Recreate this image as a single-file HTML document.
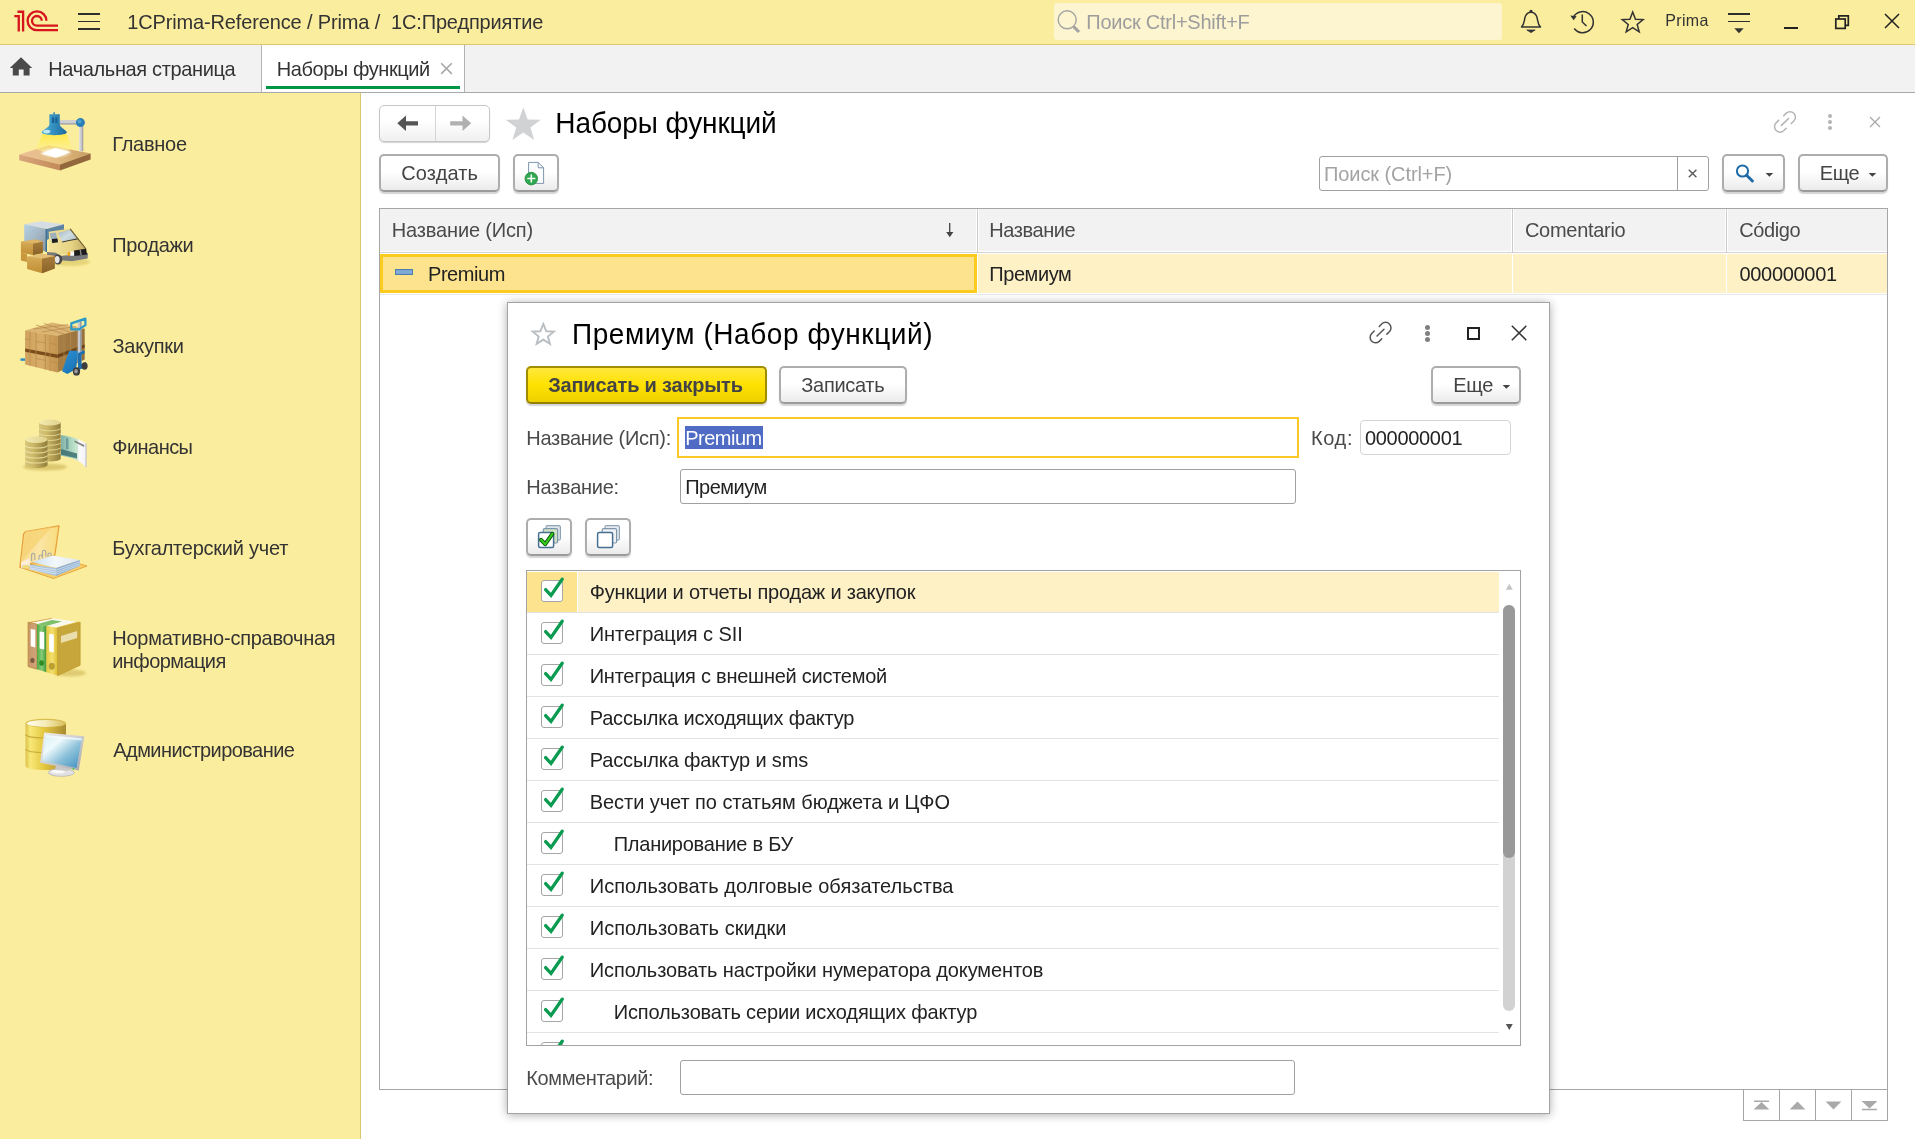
<!DOCTYPE html>
<html lang="ru"><head><meta charset="utf-8"><title>Наборы функций</title><style>
*{box-sizing:border-box;margin:0;padding:0}
html,body{width:1917px;height:1139px;overflow:hidden;background:#fff}
body{font-family:"Liberation Sans",sans-serif;position:relative}
div,span.t,svg{position:absolute}
.t{white-space:pre;transform:scaleY(1.055)}
.btn{border:2px solid #adadad;border-bottom-color:#9b9b9b;border-radius:5px;background:linear-gradient(#fff 0%,#fff 48%,#ebebeb 100%);box-shadow:0 2px 1px rgba(0,0,0,.17)}
.ybtn{border:2px solid #a18d02;border-bottom-color:#938000;border-radius:5px;background:linear-gradient(#ffe83c 0%,#ffe100 50%,#ecd100 100%);box-shadow:0 2px 1px rgba(0,0,40,.17)}
.inp{border:1px solid #a0a0a0;border-radius:3px;background:#fff}
</style></head><body>
<div style="left:0px;top:0px;width:1915px;height:44px;background:#fbed9e"></div>
<div style="left:0px;top:44px;width:1915px;height:1px;background:#d9c86e"></div>
<svg style="left:0;top:0" width="70" height="44" viewBox="0 0 70 44" fill="none" stroke="#d7141d" stroke-width="2.3">
<path d="M46.4,20.8 A9.4,9.4 0 1 0 37,30.2 H58"/><path d="M41.7,20.8 A4.85,4.85 0 1 0 36.85,25.7 H58"/>
<path d="M14.3,16.2 H18.75 V31.5"/><path d="M17.5,11.75 H23.1 V31.5"/></svg>
<div style="left:78.4px;top:13.25px;width:21.2px;height:1.5px;background:#2e2e2e"></div>
<div style="left:78.4px;top:20.75px;width:21.2px;height:1.5px;background:#2e2e2e"></div>
<div style="left:78.4px;top:28.25px;width:21.2px;height:1.5px;background:#2e2e2e"></div>
<span class="t" style="left:127.25px;top:11px;font-size:20px;line-height:22px;color:#333;font-weight:400;letter-spacing:-0.143px;transform-origin:0 18px;">1CPrima-Reference / Prima /  1С:Предприятие</span>
<div style="left:1054px;top:3px;width:448px;height:37px;background:#fdf5d0;border-radius:3px"></div>
<svg style="left:1054px;top:3px" width="34" height="37" viewBox="1054 3 34 37" fill="none" stroke="#a3a3a3"><circle cx="1067.2" cy="19.8" r="9" stroke-width="1.4"/><path d="M1073.6,26.6 L1079,32" stroke-width="3"/></svg>
<span class="t" style="left:1086.25px;top:11px;font-size:20px;line-height:22px;color:#9d9d9d;font-weight:400;letter-spacing:-0.244px;transform-origin:0 18px;">Поиск Ctrl+Shift+F</span>
<svg style="left:1516px;top:6px" width="30" height="30" viewBox="1516 6 30 30" fill="none" stroke="#333" stroke-width="1.5">
<path d="M1521.5,27 C1525,23.5 1524,19 1525.5,16 C1527,13 1529,12.2 1531,12.2 C1533,12.2 1535,13 1536.5,16 C1538,19 1537,23.5 1540.5,27 Z" stroke-linejoin="round"/>
<circle cx="1531" cy="11.3" r="0.9" fill="#333"/><path d="M1526.8,30 H1535.2 L1531,32.6 Z" fill="#333" stroke-width="0.8"/></svg>
<svg style="left:1566px;top:6px" width="32" height="32" viewBox="1566 6 32 32" fill="none" stroke="#333" stroke-width="1.5">
<path d="M1573.2,17.5 A10.6,10.6 0 1 1 1574.2,28.5"/><path d="M1582.3,14.5 V22 L1586.5,26"/><path d="M1570.3,15.5 L1573.6,20.3 L1576.6,16.2 Z" fill="#333" stroke="none"/></svg>
<svg style="left:1618px;top:6px" width="30" height="30" viewBox="1618 6 30 30" fill="none" stroke="#333" stroke-width="1.5" stroke-linejoin="miter">
<path d="M1632.70,11.97 L1635.49,19.22 L1643.12,19.60 L1637.16,24.43 L1639.21,31.87 L1632.70,27.59 L1626.19,31.87 L1628.24,24.43 L1622.28,19.60 L1629.91,19.22 Z"/></svg>
<span class="t" style="left:1665.27px;top:12px;font-size:16px;line-height:17px;color:#333;font-weight:400;letter-spacing:0.341px;transform-origin:0 14px;">Prima</span>
<div style="left:1728.3px;top:13.25px;width:21.4px;height:1.5px;background:#2e2e2e"></div>
<div style="left:1728.3px;top:20.75px;width:21.4px;height:1.5px;background:#2e2e2e"></div>
<svg style="left:1734px;top:28px" width="10" height="6" viewBox="0 0 10 6"><path d="M0.3,0.3 H9.7 L5,5.2 Z" fill="#333"/></svg>
<div style="left:1784px;top:27px;width:14px;height:2px;background:#222"></div>
<svg style="left:1833px;top:13px" width="18" height="18" viewBox="1833 13 18 18" fill="none" stroke="#222" stroke-width="1.7">
<rect x="1835.8" y="19" width="9.4" height="9.4"/><path d="M1838.8,19 V15.9 H1848.3 V25.4 H1845.2"/></svg>
<svg style="left:1883px;top:12px" width="18" height="18" viewBox="1883 12 18 18" fill="none" stroke="#222" stroke-width="1.5"><path d="M1885,14 L1899,28 M1899,14 L1885,28"/></svg>
<div style="left:0px;top:45px;width:1915px;height:47px;background:#f2f2f2"></div>
<div style="left:0px;top:92px;width:1915px;height:1px;background:#a9a9a9"></div>
<svg style="left:9px;top:56px" width="24" height="21" viewBox="9 56 24 21"><path d="M21,57.3 L32.2,68 H29.6 V75.6 H23.6 V69.6 H18.8 V75.6 H12.8 V68 H9.8 Z" fill="#4a4a4a"/></svg>
<span class="t" style="left:48.25px;top:57.5px;font-size:20px;line-height:22px;color:#333;font-weight:400;letter-spacing:-0.354px;transform-origin:0 18px;">Начальная страница</span>
<div style="left:261px;top:45px;width:204px;height:47px;background:#fff;border-left:1px solid #b3b3b3;border-right:1px solid #b3b3b3"></div>
<div style="left:266px;top:86px;width:194px;height:3px;background:#009646"></div>
<span class="t" style="left:276.75px;top:57.5px;font-size:20px;line-height:22px;color:#333;font-weight:400;letter-spacing:-0.430px;transform-origin:0 18px;">Наборы функций</span>
<svg style="left:438px;top:60px" width="17" height="17" viewBox="438 60 17 17" fill="none" stroke="#a8a8a8" stroke-width="1.6"><path d="M441.2,63.3 L451.8,73.9 M451.8,63.3 L441.2,73.9"/></svg>
<div style="left:0px;top:93px;width:360px;height:1046px;background:#fbed9e"></div>
<div style="left:360px;top:93px;width:1px;height:1046px;background:#d9c86e"></div>
<span class="t" style="left:112.25px;top:132.5px;font-size:20px;line-height:22px;color:#333;font-weight:400;letter-spacing:-0.277px;transform-origin:0 18px;">Главное</span>
<span class="t" style="left:112.25px;top:233.5px;font-size:20px;line-height:22px;color:#333;font-weight:400;letter-spacing:-0.335px;transform-origin:0 18px;">Продажи</span>
<span class="t" style="left:112.4px;top:334.5px;font-size:20px;line-height:22px;color:#333;font-weight:400;letter-spacing:-0.231px;transform-origin:0 18px;">Закупки</span>
<span class="t" style="left:112.31px;top:435.5px;font-size:20px;line-height:22px;color:#333;font-weight:400;letter-spacing:-0.547px;transform-origin:0 18px;">Финансы</span>
<span class="t" style="left:112.25px;top:536.5px;font-size:20px;line-height:22px;color:#333;font-weight:400;letter-spacing:-0.244px;transform-origin:0 18px;">Бухгалтерский учет</span>
<span class="t" style="left:112.25px;top:626.5px;font-size:20px;line-height:22px;color:#333;font-weight:400;letter-spacing:-0.252px;transform-origin:0 18px;">Нормативно-справочная</span>
<span class="t" style="left:112.26px;top:649.5px;font-size:20px;line-height:22px;color:#333;font-weight:400;letter-spacing:-0.578px;transform-origin:0 18px;">информация</span>
<span class="t" style="left:113.29px;top:738.5px;font-size:20px;line-height:22px;color:#333;font-weight:400;letter-spacing:-0.570px;transform-origin:0 18px;">Администрирование</span>
<svg style="left:0;top:100px" width="100" height="700" viewBox="0 100 100 700">
<defs>
<linearGradient id="gWoodT" x1="0" y1="0" x2="1" y2="0"><stop offset="0" stop-color="#ecc097"/><stop offset=".5" stop-color="#e3bd84"/><stop offset="1" stop-color="#c69c62"/></linearGradient>
<linearGradient id="gWoodL" x1="0" y1="0" x2="1" y2="0"><stop offset="0" stop-color="#d9a67c"/><stop offset="1" stop-color="#c28a58"/></linearGradient>
<linearGradient id="gShade" x1="0" y1="0" x2="1" y2="0"><stop offset="0" stop-color="#5fb6d8"/><stop offset=".3" stop-color="#3d9bc9"/><stop offset="1" stop-color="#1a6a9d"/></linearGradient>
<linearGradient id="gPost" x1="0" y1="0" x2="1" y2="0"><stop offset="0" stop-color="#e4e4e4"/><stop offset=".6" stop-color="#c4c4c8"/><stop offset="1" stop-color="#8e8e96"/></linearGradient>
<linearGradient id="gCone" x1="0" y1="0" x2="0" y2="1"><stop offset="0" stop-color="#ffe93a" stop-opacity=".85"/><stop offset="1" stop-color="#fff7a8" stop-opacity=".35"/></linearGradient>
<radialGradient id="gGlow" cx=".5" cy=".5" r=".5"><stop offset="0" stop-color="#fff"/><stop offset=".55" stop-color="#fff" stop-opacity=".9"/><stop offset="1" stop-color="#fff3c8" stop-opacity="0"/></radialGradient>
<linearGradient id="gBoxL" x1="0" y1="0" x2="0" y2="1"><stop offset="0" stop-color="#d9ae5c"/><stop offset="1" stop-color="#c18f34"/></linearGradient>
<linearGradient id="gBoxR" x1="0" y1="0" x2="0" y2="1"><stop offset="0" stop-color="#a77d3c"/><stop offset="1" stop-color="#8a6228"/></linearGradient>
<linearGradient id="gCargo" x1="0" y1="0" x2="1" y2="1"><stop offset="0" stop-color="#b4d2e6"/><stop offset=".5" stop-color="#a4b6c4"/><stop offset="1" stop-color="#8894a0"/></linearGradient>
<linearGradient id="gCab" x1="0" y1="0" x2="1" y2="0"><stop offset="0" stop-color="#f1e19a"/><stop offset=".6" stop-color="#e6d384"/><stop offset="1" stop-color="#bfa860"/></linearGradient>
<linearGradient id="gGlass" x1="0" y1="0" x2="1" y2="1"><stop offset="0" stop-color="#9fb2bc"/><stop offset=".5" stop-color="#cfdde2"/><stop offset="1" stop-color="#a9bbc2"/></linearGradient>
<linearGradient id="gCubeL" x1="0" y1="0" x2="1" y2="0"><stop offset="0" stop-color="#cfa25e"/><stop offset=".5" stop-color="#d8ad68"/><stop offset="1" stop-color="#c4944e"/></linearGradient>
<linearGradient id="gCubeR" x1="0" y1="0" x2="1" y2="0"><stop offset="0" stop-color="#a87e44"/><stop offset="1" stop-color="#96703c"/></linearGradient>
<linearGradient id="gJack" x1="0" y1="0" x2="1" y2="1"><stop offset="0" stop-color="#2d92d6"/><stop offset="1" stop-color="#1468a8"/></linearGradient>
<linearGradient id="gCoin" x1="0" y1="0" x2="1" y2="0"><stop offset="0" stop-color="#d6c67c"/><stop offset=".35" stop-color="#cdb968"/><stop offset="1" stop-color="#8f7c3a"/></linearGradient>
<linearGradient id="gCoinT" x1="0" y1="0" x2="1" y2="0"><stop offset="0" stop-color="#f4ebb0"/><stop offset="1" stop-color="#e0d28e"/></linearGradient>
<linearGradient id="gNote" x1="0" y1="0" x2="1" y2="0"><stop offset="0" stop-color="#7fb0a8"/><stop offset=".45" stop-color="#b4dcc4"/><stop offset=".66" stop-color="#cfe8d4"/><stop offset=".7" stop-color="#fbfbfd"/><stop offset="1" stop-color="#f2f2f8"/></linearGradient>
<linearGradient id="gFold" x1="0" y1="0" x2="1" y2="0"><stop offset="0" stop-color="#f8d98a"/><stop offset=".5" stop-color="#fbe6a6"/><stop offset="1" stop-color="#f7dc7c"/></linearGradient>
<linearGradient id="gPap" x1="0" y1="0" x2="1" y2="0"><stop offset="0" stop-color="#c9dff0"/><stop offset=".5" stop-color="#f4f8fc"/><stop offset="1" stop-color="#dfe6ee"/></linearGradient>
<linearGradient id="gDb" x1="0" y1="0" x2="1" y2="0"><stop offset="0" stop-color="#dcc24a"/><stop offset=".12" stop-color="#f8e878"/><stop offset=".45" stop-color="#e4c840"/><stop offset="1" stop-color="#a88a34"/></linearGradient>
<linearGradient id="gDbT" x1="0" y1="0" x2="1" y2="0"><stop offset="0" stop-color="#fffdf0"/><stop offset=".5" stop-color="#f6ecb8"/><stop offset="1" stop-color="#d8c060"/></linearGradient>
<linearGradient id="gScr" x1="0" y1="0" x2="1" y2="1"><stop offset="0" stop-color="#d6eef6"/><stop offset=".3" stop-color="#eefafc"/><stop offset=".6" stop-color="#8fc2da"/><stop offset="1" stop-color="#3a8fc0"/></linearGradient>
<linearGradient id="gFrm" x1="0" y1="0" x2="1" y2="1"><stop offset="0" stop-color="#f2f2f2"/><stop offset="1" stop-color="#a8a8ac"/></linearGradient>
<linearGradient id="gBrown" x1="0" y1="0" x2="1" y2="0"><stop offset="0" stop-color="#c99866"/><stop offset="1" stop-color="#cfa47c"/></linearGradient>
<linearGradient id="gGreen" x1="0" y1="0" x2="1" y2="0"><stop offset="0" stop-color="#4ea83e"/><stop offset=".5" stop-color="#86cc78"/><stop offset="1" stop-color="#3f9432"/></linearGradient>
<linearGradient id="gYel" x1="0" y1="0" x2="1" y2="0"><stop offset="0" stop-color="#e4c83c"/><stop offset=".5" stop-color="#f4e070"/><stop offset="1" stop-color="#dcbc30"/></linearGradient>
<filter id="bl" x="-20%" y="-20%" width="140%" height="140%"><feGaussianBlur stdDeviation="0.35"/></filter>
<filter id="bl2" x="-30%" y="-30%" width="160%" height="160%"><feGaussianBlur stdDeviation="1.2"/></filter>
</defs>

<!-- 1 lamp -->
<g filter="url(#bl)">
<path d="M19.2,154.4 L48.8,145.2 L90.6,153.4 L60,164.6 Z" fill="url(#gWoodT)"/>
<path d="M19.2,154.4 L60,164.6 V170.5 L19.2,160.3 Z" fill="url(#gWoodL)"/>
<path d="M60,164.6 L90.6,153.4 V159.6 L60,170.5 Z" fill="#94683e"/>
<path d="M42.6,134 H66.6 L72,148.6 L56,157 L36,149 Z" fill="url(#gCone)"/>
<ellipse cx="55.5" cy="152.8" rx="17" ry="5.6" fill="url(#gGlow)" opacity=".8"/>
<path d="M41,153.4 L55.4,148.1 L70.9,152.1 L56.1,157.7 Z" fill="#fff"/>
<rect x="79.1" y="126" width="4.1" height="25.3" fill="url(#gPost)"/>
<path d="M59.5,120.1 H77 V124.3 H59.5 Z" fill="#cfcfd2"/>
<path d="M59.5,123.3 H77 V124.5 H59.5 Z" fill="#9a9aa0"/>
<circle cx="80.4" cy="122.6" r="4.5" fill="#2a80b6"/><circle cx="79.4" cy="121.4" r="2" fill="#4da0cf"/>
<path d="M53.4,112.3 H54.9 V114.4 H53.4 Z" fill="#2a7fb4"/>
<path d="M49.4,114.3 H59.8 V124.8 C60.5,127.5 65,129.6 66.9,132 C67.4,136.2 41.2,136.2 41.6,132 C43.5,129.6 48.8,127.5 49.4,124.8 Z" fill="url(#gShade)"/>
<path d="M52,117.5 H54 V123 H52 Z M55.2,117.5 H57.2 V123 H55.2 Z" fill="#185f92"/>
<ellipse cx="46.8" cy="131.6" rx="3.6" ry="1.8" fill="#cdeef8" opacity=".9"/>
</g>

<!-- 2 truck -->
<g filter="url(#bl)">
<ellipse cx="70" cy="262" rx="20" ry="4" fill="#d8c35e" opacity=".6" filter="url(#bl2)"/>
<path d="M24.2,224.2 L40.9,221.2 L64,224.2 L46.9,229.1 Z" fill="#d6dde4"/>
<path d="M24.2,224.2 L46.9,229.1 V252.1 L24.2,244 Z" fill="url(#gCargo)"/>
<path d="M46.9,229.1 L64,224.2 V232 L46.9,240 Z" fill="#5d84a0"/>
<path d="M45.6,229 L46.9,229.1 V252.1 L45.6,252 Z" fill="#2d6b92"/>
<path d="M48.8,231.7 L70.6,228.4 L86.4,248.8 L87,256 L49.5,253.4 Z" fill="url(#gCab)"/>
<path d="M58,233 L70.6,229.4 L77.8,238.3 L62,241.6 Z" fill="url(#gGlass)"/>
<path d="M49.5,233.2 L56,232.4 L58,242.3 L52.1,243 Z" fill="#9eb0bc"/>
<path d="M52,239 L57.4,238.5 L58,242.3 L52.1,243 Z" fill="#1c1c1c"/>
<path d="M62,241.6 L77.8,238.3 L78.6,239.3 L69,241 L62.3,242.6 Z" fill="#3a3a32"/>
<path d="M70.6,228.4 L86.4,248.8 L85.4,249 L69.8,229.4 Z" fill="#6c5e30"/>
<path d="M47,252 L56,252.8 L60,256 L88,253 L87.6,258.6 L72,261.3 L58,260 L47,255 Z" fill="#77787a"/>
<ellipse cx="58" cy="259.4" rx="4.2" ry="5.2" fill="#444"/>
<ellipse cx="57.2" cy="259.6" rx="2.4" ry="3.6" fill="#e6e6e6"/>
<path d="M74,250.6 L86,248.8 L87,254.6 L74,256 Z" fill="#1a1a1a"/>
<path d="M79.6,250 L81,249.8 L81.8,255 L80.4,255.2 Z" fill="#8a8a8a"/>
<rect x="70.2" y="251.6" width="4" height="4.2" fill="#f6f6f6"/>
<rect x="67.8" y="252" width="2.4" height="3.8" fill="#f6a018"/>
<path d="M20.9,241.8 L35,239.6 L42.9,241.4 V253 L33,255 L20.9,252.8 Z" fill="url(#gBoxL)"/>
<path d="M33,243.6 L42.9,241.4 V253 L33,255 Z" fill="url(#gBoxR)"/>
<path d="M20.9,241.8 L35,239.6 L42.9,241.4 L33,243.6 Z" fill="#ddb565"/>
<path d="M20.9,252.8 L27,254 V262 L20.9,260.6 Z" fill="#c8983c"/>
<path d="M27.1,256.4 L42,254 L54.8,256 V268.4 L42,273.2 L27.1,269 Z" fill="url(#gBoxL)"/>
<path d="M42,258.6 L54.8,256 V268.4 L42,273.2 Z" fill="url(#gBoxR)"/>
<path d="M27.1,256.4 L42,254 L54.8,256 L42,258.6 Z" fill="#e2bf74"/>
</g>

<!-- 3 boxes + jack -->
<g filter="url(#bl)">
<path d="M20.5,358.4 H25 V360.8 H20.5 Z" fill="#2a8cc8"/>
<path d="M25.1,330.4 L52.1,322.5 L84.7,328.4 L57.4,335.7 Z" fill="#dcb574"/>
<path d="M25.1,330.4 L57.4,335.7 V372.5 L25.1,364.6 Z" fill="url(#gCubeL)"/>
<path d="M57.4,335.7 L84.7,328.4 V359.4 L57.4,372.5 Z" fill="url(#gCubeR)"/>
<path d="M25.1,348.6 L57.4,354.6 V358 L25.1,351.8 Z" fill="#7c4e1c"/>
<path d="M57.4,354.6 L84.7,344.4 V347.4 L57.4,358 Z" fill="#6e4418"/>
<g stroke="#b58a4a" stroke-width=".7" fill="none">
<path d="M30,331.2 V365.8 M36,332.2 V367.2 M45.4,333.8 V369.6 M50,334.6 V370.8"/><path d="M64,334 V369 M70.6,332.2 V366 M77.2,330.4 V363"/>
<path d="M36,325 L64,334 M44,323.5 L70.6,332.2 M33,329 L68,324.6 M42,332 L76,326.4"/>
<path d="M25.1,339 L30,339.8 M36,341.4 L45.4,343 M50,343.4 L57.4,344.6 M36,358.6 L45.4,360.4 M50,361.6 L57.4,363"/>
</g>
<path d="M69.2,350.8 H84.4 V353.5 L78.5,354.8 L75.8,369.2 L67.3,373.9 L62,371.2 Z" fill="url(#gJack)"/>
<path d="M77.8,321 H81.4 V367.9 H77.8 Z" fill="#c6cad0"/><path d="M80.2,321 H81.4 V367.9 H80.2 Z" fill="#8e949c"/>
<path d="M78,353 L84.4,351 L84.4,353.6 L81.4,354.6 V364 L86,362 L84,368 L78,370 Z" fill="#1a6fb0"/>
<path d="M71.3,323.4 L85.4,318.6 V325.2 L79,329.4 H71.3 Z" fill="none" stroke="#2a9ac8" stroke-width="2.2" stroke-linejoin="round"/>
<ellipse cx="84.6" cy="366" rx="3" ry="3.8" fill="#3c3c3c"/><ellipse cx="76.5" cy="371.4" rx="3.6" ry="4.2" fill="#3a3a3a"/><ellipse cx="76" cy="371.2" rx="1.8" ry="2.2" fill="#9a9a9a"/>
</g>

<!-- 4 coins + note -->
<g filter="url(#bl)">
<ellipse cx="45" cy="467" rx="22" ry="3.4" fill="#c8b050" opacity=".6" filter="url(#bl2)"/>
<path d="M61,435.3 C70,436 80,439 86.4,443.6 V467.6 C82,463 78,460 71,458 L61,455.4 Z" fill="url(#gNote)"/>
<path d="M61,449 L77,453.4 V458.4 L61,454.6 Z" fill="#3d7070" opacity=".85"/>
<path d="M66,438 L68.4,438.6 V449.6 L66,449 Z" fill="#5a8a90" opacity=".7"/>
<path d="M74.6,440.4 L84.4,445 L84,447 L74.4,442 Z" fill="#555" opacity=".7"/>
<path d="M85.6,443 L86.4,443.6 V467.6 L85.6,467 Z" fill="#a8a8b8"/>
<path d="M39,422.5 V458.6 C39,462.6 60.7,462.6 60.7,458.6 V422.5 Z" fill="url(#gCoin)"/>
<g stroke="#f0e6a6" stroke-width="1" fill="none" opacity=".75"><path d="M39,428.6 C41,431.6 58,431.6 60.7,428.6 M39,433.4 C41,436.4 58,436.4 60.7,433.4 M39,438.2 C41,441.2 58,441.2 60.7,438.2 M39,443 C41,446 58,446 60.7,443 M39,447.8 C41,450.8 58,450.8 60.7,447.8 M39,452.6 C41,455.6 58,455.6 60.7,452.6"/></g>
<ellipse cx="49.85" cy="422.5" rx="10.85" ry="3" fill="url(#gCoinT)"/>
<path d="M25.1,439.6 V464.8 C25.1,469.2 47.5,469.2 47.5,464.8 V439.6 Z" fill="url(#gCoin)"/>
<g stroke="#f0e6a6" stroke-width="1.1" fill="none" opacity=".8"><path d="M25.1,445.6 C27,448.8 45,448.8 47.5,445.6 M25.1,450.6 C27,453.8 45,453.8 47.5,450.6 M25.1,455.6 C27,458.8 45,458.8 47.5,455.6 M25.1,460.6 C27,463.8 45,463.8 47.5,460.6"/></g>
<ellipse cx="36.3" cy="439.6" rx="11.2" ry="3.3" fill="url(#gCoinT)"/>
</g>

<!-- 5 folder -->
<g filter="url(#bl)">
<path d="M19.9,567.3 L53.5,578.5 L87,566 L60,558 Z" fill="#f6cf6a" stroke="#e8a640" stroke-width="1"/>
<path d="M25.6,531.6 L59,525.8 L54.8,555.4 L19.9,567.3 L23.6,534 Z" fill="url(#gFold)" stroke="#e8a23c" stroke-width="1.3" stroke-linejoin="round"/>
<path d="M25.6,531.6 L52,527 L20.6,562 Z" fill="#f5d272" opacity=".75"/>
<path d="M21,562 L30,558 L30,566 L21,568 Z" fill="#fdf0dc" opacity=".9"/>
<rect x="22.6" y="565.4" width="5.6" height="2.6" fill="#f6e26a" stroke="#d8d0b0" stroke-width=".5"/>
<g fill="none" stroke="#a8a8a4" stroke-width="1.1"><path d="M31.6,561 V555 a1.6,1.6 0 0 1 3.2,0 V560"/><path d="M39,560 V556.6 a1.6,1.6 0 0 1 3.2,0 V558.6"/><path d="M42.4,557 V552 a1.7,1.7 0 0 1 3.4,0 V556.4"/><path d="M48,557 V554.6 a1.6,1.6 0 0 1 3.2,0 V556"/></g>
<path d="M31.7,562 L52.8,555.4 L79.8,560 L56.1,568 Z" fill="url(#gPap)"/>
<path d="M29.8,564.6 L56.1,568 V576 L29.8,569.4 Z" fill="#a9c4de"/>
<path d="M56.1,568 L79.8,560 V566 L56.1,576 Z" fill="#8fb0d2"/>
<g stroke="#eef4fa" stroke-width=".6" fill="none"><path d="M29.8,566.2 L56.1,570 L79.8,561.8 M29.8,567.8 L56.1,572 L79.8,563.6 M29.8,569 L56.1,574 L79.8,565"/></g>
</g>

<!-- 6 binders -->
<g filter="url(#bl)">
<ellipse cx="70" cy="673" rx="16" ry="3.4" fill="#c8b050" opacity=".55" filter="url(#bl2)"/>
<path d="M28.1,622.2 L50.8,618 L80.1,622.2 L57.7,628.1 Z" fill="#faf8ec"/>
<path d="M37,624.2 L52,620 L62,621.4 L46.5,626.1 Z" fill="#7cc06a"/>
<path d="M28.1,622.2 L50.8,618 L53,618.6 L30,623 Z" fill="#d8a848"/>
<path d="M57.7,628.1 L80.1,622.2 L78,621.6 L56,627.4 Z" fill="#e8cc50"/>
<path d="M28.1,622.2 L37,624.2 V669.2 L28.1,666.6 Z" fill="url(#gBrown)" stroke="#b8863c" stroke-width=".8"/>
<path d="M30.7,629.1 L35.3,629.8 V647.6 L30.7,646.2 Z" fill="#fff"/>
<ellipse cx="32.4" cy="660.4" rx="2.2" ry="2.6" fill="#7c5a3c"/>
<path d="M37,624.2 L46.5,626.1 V672.2 L37,669.2 Z" fill="url(#gGreen)"/>
<path d="M39.6,631.4 L44.2,632.2 V649.6 L39.6,648.6 Z" fill="#fff"/>
<ellipse cx="41.6" cy="663" rx="2.4" ry="2.8" fill="#2f8a24"/>
<path d="M46.5,626.1 L57.7,628.1 V675.5 L46.5,672.2 Z" fill="url(#gYel)"/>
<path d="M49.2,633.7 L53.8,634.5 V652.5 L49.2,651.5 Z" fill="#fff"/>
<ellipse cx="51.8" cy="666.3" rx="2.8" ry="3.2" fill="#c0a020" stroke="#a8a070" stroke-width=".6"/>
<path d="M57.7,628.1 L80.1,622.2 V665.3 L57.7,675.5 Z" fill="#c7a73a" stroke="#c09a28" stroke-width=".8"/>
<path d="M61,636 L77.1,631.1 V638 L61,642.9 Z" fill="#e9deac"/>
</g>

<!-- 7 db + monitor -->
<g filter="url(#bl)">
<path d="M25.5,723.2 V766 C25.5,771.4 66,771.4 66,766 V723.2 Z" fill="url(#gDb)"/>
<path d="M25.5,734.6 C28,739 63,739 66,734.6" fill="none" stroke="#c8a838" stroke-width="1.2" opacity=".9"/>
<path d="M25.5,749.2 C28,753.6 63,753.6 66,749.2" fill="none" stroke="#c8a838" stroke-width="1.2" opacity=".9"/>
<ellipse cx="45.75" cy="723.2" rx="20.25" ry="4.4" fill="#d8be50"/>
<ellipse cx="45.75" cy="723.4" rx="19" ry="3.5" fill="url(#gDbT)"/>
<ellipse cx="61.3" cy="772.5" rx="13" ry="3.8" fill="#e2e2e2" stroke="#b4b4b4" stroke-width=".8"/>
<ellipse cx="58" cy="771.4" rx="7" ry="1.8" fill="#fafafa"/>
<path d="M56,764 L70,768 L68,771 L55,770 Z" fill="#c8c8c8"/>
<path d="M44.2,732.4 L84.4,736.3 L78.8,770.6 L40,762.7 Z" fill="url(#gFrm)"/>
<path d="M45.5,735.3 L81.8,738.3 L76.5,767.9 L42.3,761 Z" fill="url(#gScr)"/>
<path d="M45.5,735.3 L81.8,738.3 L81.4,740.4 L45.8,737.2 Z" fill="#f6fafc" opacity=".7"/>
<circle cx="73.4" cy="768.8" r=".9" fill="#3cc040"/>
</g>
</svg>

<div style="left:379px;top:105px;width:111px;height:37px;border:1px solid #c6c6c6;border-radius:5px;background:linear-gradient(#fff 40%,#f0f0f0);box-shadow:0 1px 1px rgba(0,0,0,.18)"></div>
<div style="left:435px;top:106px;width:1px;height:35px;background:#d6d6d6"></div>
<svg style="left:395px;top:113px" width="26" height="20" viewBox="395 113 26 20"><path d="M397.3,123.3 L406,115.6 V121.2 H418 V125.4 H406 V131 Z" fill="#555"/></svg>
<svg style="left:448px;top:113px" width="26" height="20" viewBox="448 113 26 20"><path d="M471.2,123.3 L462.5,115.6 V121.2 H450.2 V125.4 H462.5 V131 Z" fill="#b0b0b0"/></svg>
<svg style="left:503px;top:105px" width="40" height="37" viewBox="503 105 40 37"><path d="M523.3,107.3 L527.6,119.4 L540.9,119.8 L530.4,127.6 L534.2,139.9 L523.3,132.5 L512.4,139.9 L516.2,127.6 L505.7,119.8 L519,119.4 Z" fill="#d0d2d3"/></svg>
<span class="t" style="left:555.28px;top:107.5px;font-size:28px;line-height:31px;color:#000;font-weight:400;letter-spacing:-0.090px;transform-origin:0 25px;">Наборы функций</span>
<svg style="left:0;top:0" width="1917" height="1139" viewBox="0 0 1917 1139" fill="none" stroke="#b4b4b4" stroke-width="1.5" stroke-linecap="round"><path d="M1779.8,126.9 m3.9,-11.1 l2.55,-2.65 a5.45,5.45 0 0 1 7.7,7.7 l-2.65,2.65 M1779.8,126.9 m6.4,1.3 l-2.55,2.55 a5.45,5.45 0 0 1 -7.7,-7.7 l2.65,-2.65 M1779.8,126.9 m1.6,-1.5 l7,-6.8"/></svg>
<div style="left:1827.6px;top:113.6px;width:4.8px;height:4.8px;background:#b4b4b4;border-radius:50%"></div>
<div style="left:1827.6px;top:119.6px;width:4.8px;height:4.8px;background:#b4b4b4;border-radius:50%"></div>
<div style="left:1827.6px;top:125.6px;width:4.8px;height:4.8px;background:#b4b4b4;border-radius:50%"></div>
<svg style="left:1868px;top:115px" width="14" height="14" viewBox="1868 115 14 14" fill="none" stroke="#a6a6a6" stroke-width="1.2"><path d="M1870,117 L1880,127 M1880,117 L1870,127"/></svg>
<div class="btn" style="left:379px;top:154px;width:121px;height:38px;"></div>
<span class="t" style="left:401.34px;top:161.8px;font-size:20px;line-height:22px;color:#444;font-weight:400;letter-spacing:0.093px;transform-origin:0 18px;">Создать</span>
<div class="btn" style="left:513px;top:154px;width:46px;height:38px;"></div>
<svg style="left:524px;top:160px" width="24" height="26" viewBox="524 160 24 26"><path d="M528.6,162.4 H538.2 L543.6,167.8 V183.4 H528.6 Z" fill="#fbfcfd" stroke="#7f95ad" stroke-width="1"/><path d="M538.2,162.4 V167.8 H543.6" fill="none" stroke="#7f95ad" stroke-width="1"/><circle cx="531.3" cy="178.6" r="6.3" fill="#2fa84f" stroke="#1f8a3c" stroke-width=".8"/><path d="M531.3,174.6 V182.6 M527.3,178.6 H535.3" stroke="#fff" stroke-width="1.5"/></svg>
<div class="inp" style="left:1319px;top:156px;width:390px;height:35px;"></div>
<div style="left:1677px;top:157px;width:1px;height:33px;background:#a0a0a0"></div>
<span class="t" style="left:1324.0px;top:162.5px;font-size:20px;line-height:22px;color:#a3a3a3;font-weight:400;letter-spacing:-0.080px;transform-origin:0 18px;">Поиск (Ctrl+F)</span>
<svg style="left:1686px;top:167px" width="14" height="14" viewBox="1686 167 14 14" fill="none" stroke="#5a5a5a" stroke-width="1.4"><path d="M1688.8,169.7 L1696.4,177.3 M1696.4,169.7 L1688.8,177.3"/></svg>
<div class="btn" style="left:1722px;top:154px;width:63px;height:38px;"></div>
<svg style="left:1732px;top:161px" width="26" height="26" viewBox="1732 161 26 26" fill="none" stroke="#1e6aa6"><circle cx="1742.5" cy="171" r="5.6" stroke-width="2"/><path d="M1746.6,175.3 L1752.4,181" stroke-width="3" stroke-linecap="round"/></svg>
<svg style="left:1765px;top:172px" width="9" height="6" viewBox="0 0 9 6"><path d="M0.6,1 H8.2 L4.4,4.8 Z" fill="#444"/></svg>
<div class="btn" style="left:1798px;top:154px;width:90px;height:38px;"></div>
<span class="t" style="left:1819.85px;top:161.8px;font-size:20px;line-height:22px;color:#444;font-weight:400;letter-spacing:-0.452px;transform-origin:0 18px;">Еще</span>
<svg style="left:1868px;top:172px" width="9" height="6" viewBox="0 0 9 6"><path d="M0.6,1 H8.2 L4.4,4.8 Z" fill="#444"/></svg>
<div style="left:379px;top:208px;width:1509px;height:882px;border:1px solid #a6a6a6;background:#fff"></div>
<div style="left:380px;top:209px;width:1507px;height:42px;background:#f2f2f2"></div>
<div style="left:380px;top:252px;width:1507px;height:1px;background:#d2d2d2"></div>
<div style="left:976px;top:209px;width:3px;height:43px;background:#fff"></div>
<div style="left:977px;top:209px;width:1px;height:44px;background:#cbcbcb"></div>
<div style="left:1511px;top:209px;width:3px;height:43px;background:#fff"></div>
<div style="left:1512px;top:209px;width:1px;height:44px;background:#cbcbcb"></div>
<div style="left:1725px;top:209px;width:3px;height:43px;background:#fff"></div>
<div style="left:1726px;top:209px;width:1px;height:44px;background:#cbcbcb"></div>
<span class="t" style="left:391.75px;top:219px;font-size:20px;line-height:22px;color:#4a4a4a;font-weight:400;letter-spacing:-0.156px;transform-origin:0 18px;">Название (Исп)</span>
<span class="t" style="left:989.25px;top:219px;font-size:20px;line-height:22px;color:#4a4a4a;font-weight:400;letter-spacing:-0.431px;transform-origin:0 18px;">Название</span>
<span class="t" style="left:1524.94px;top:219px;font-size:20px;line-height:22px;color:#4a4a4a;font-weight:400;letter-spacing:-0.288px;transform-origin:0 18px;">Comentario</span>
<span class="t" style="left:1739.24px;top:219px;font-size:20px;line-height:22px;color:#4a4a4a;font-weight:400;letter-spacing:-0.399px;transform-origin:0 18px;">Código</span>
<svg style="left:944px;top:221px" width="12" height="18" viewBox="944 221 12 18"><path d="M949.7,223 V233 " stroke="#444" stroke-width="1.3" fill="none"/><path d="M946.2,232 H953.4 L949.8,237.2 Z" fill="#444"/></svg>
<div style="left:380px;top:254px;width:1507px;height:39px;background:#fef1c6"></div>
<div style="left:977px;top:254px;width:1px;height:39px;background:#fff"></div>
<div style="left:1512px;top:254px;width:1px;height:39px;background:#fff"></div>
<div style="left:1726px;top:254px;width:1px;height:39px;background:#fff"></div>
<div style="left:380px;top:254px;width:597px;height:39px;background:#fde38d;border:3px solid #fbcb1e"></div>
<div style="left:380px;top:294px;width:1507px;height:1px;background:#e9e9e9"></div>
<div style="left:395px;top:268.8px;width:18.2px;height:6.3px;background:#7ea9d2;border:1px solid #4b7dab"></div>
<span class="t" style="left:428.0px;top:262.8px;font-size:20px;line-height:22px;color:#222;font-weight:400;letter-spacing:-0.438px;transform-origin:0 18px;">Premium</span>
<span class="t" style="left:989.25px;top:262.8px;font-size:20px;line-height:22px;color:#222;font-weight:400;letter-spacing:-0.425px;transform-origin:0 18px;">Премиум</span>
<span class="t" style="left:1739.48px;top:262.8px;font-size:20px;line-height:22px;color:#222;font-weight:400;letter-spacing:-0.309px;transform-origin:0 18px;">000000001</span>
<div style="left:1743px;top:1089px;width:145px;height:32px;border:1px solid #a6a6a6;background:#fff"></div>
<div style="left:1779px;top:1089px;width:1px;height:32px;background:#a6a6a6"></div>
<div style="left:1815px;top:1089px;width:1px;height:32px;background:#a6a6a6"></div>
<div style="left:1851px;top:1089px;width:1px;height:32px;background:#a6a6a6"></div>
<svg style="left:1743px;top:1089px" width="145" height="32" viewBox="1743 1089 145 32" fill="#a9a9a9">
<path d="M1754,1100.6 H1769 V1102 H1754 Z M1761.5,1102 L1769.4,1109.6 H1753.6 Z"/>
<path d="M1797.5,1101.6 L1805.4,1109.6 H1789.6 Z"/>
<path d="M1833.5,1109.6 L1841.4,1101.6 H1825.6 Z"/>
<path d="M1869.5,1108.6 L1877.4,1101 H1861.6 Z M1862,1108.8 H1877 V1110.2 H1862 Z"/></svg>
<div style="left:507px;top:302px;width:1043px;height:812px;border:1px solid #a3a3a3;background:#fff;box-shadow:0 1px 9px rgba(0,0,0,.33)"></div>
<svg style="left:528px;top:318px" width="30" height="30" viewBox="528 318 30 30" fill="none" stroke="#b9bec3" stroke-width="1.9"><path d="M543.30,323.93 L546.27,331.31 L553.83,331.67 L547.89,336.53 L549.96,343.91 L543.30,339.59 L536.64,343.91 L538.71,336.53 L532.77,331.67 L540.33,331.31 Z"/></svg>
<span class="t" style="left:572.04px;top:318.75px;font-size:28px;line-height:31px;color:#000;font-weight:400;letter-spacing:0.564px;transform-origin:0 25px;">Премиум (Набор функций)</span>
<svg style="left:0;top:0" width="1917" height="1139" viewBox="0 0 1917 1139" fill="none" stroke="#555" stroke-width="1.5" stroke-linecap="round"><path d="M1375.4,337.5 m3.9,-11.1 l2.55,-2.65 a5.45,5.45 0 0 1 7.7,7.7 l-2.65,2.65 M1375.4,337.5 m6.4,1.3 l-2.55,2.55 a5.45,5.45 0 0 1 -7.7,-7.7 l2.65,-2.65 M1375.4,337.5 m1.6,-1.5 l7,-6.8"/></svg>
<div style="left:1424.8px;top:324.8px;width:5px;height:5px;background:#808080;border-radius:50%"></div>
<div style="left:1424.8px;top:331.1px;width:5px;height:5px;background:#808080;border-radius:50%"></div>
<div style="left:1424.8px;top:337.3px;width:5px;height:5px;background:#808080;border-radius:50%"></div>
<div style="left:1467px;top:327px;width:13.2px;height:13px;border:2px solid #222"></div>
<svg style="left:1509px;top:323px" width="20" height="20" viewBox="1509 323 20 20" fill="none" stroke="#333" stroke-width="1.5"><path d="M1511.8,325.8 L1526.3,340.2 M1526.3,325.8 L1511.8,340.2"/></svg>
<div class="ybtn" style="left:526px;top:366px;width:241px;height:38px;"></div>
<span class="t" style="left:548.25px;top:373.8px;font-size:20px;line-height:22px;color:#444;font-weight:700;letter-spacing:-0.204px;transform-origin:0 18px;">Записать и закрыть</span>
<div class="btn" style="left:779px;top:366px;width:128px;height:38px;"></div>
<span class="t" style="left:801.3px;top:373.8px;font-size:20px;line-height:22px;color:#444;font-weight:400;letter-spacing:-0.304px;transform-origin:0 18px;">Записать</span>
<div class="btn" style="left:1431px;top:366px;width:90px;height:38px;"></div>
<span class="t" style="left:1453.25px;top:373.8px;font-size:20px;line-height:22px;color:#444;font-weight:400;letter-spacing:-0.302px;transform-origin:0 18px;">Еще</span>
<svg style="left:1501.5px;top:384.3px" width="9" height="6" viewBox="0 0 9 6"><path d="M0.6,1 H8.2 L4.4,4.8 Z" fill="#444"/></svg>
<span class="t" style="left:526.25px;top:426.5px;font-size:20px;line-height:22px;color:#4a4a4a;font-weight:400;letter-spacing:-0.286px;transform-origin:0 18px;">Название (Исп):</span>
<div style="left:677px;top:417px;width:622px;height:41px;border:2px solid #fbc926;background:#fff"></div>
<div style="left:685px;top:426px;width:77.5px;height:22.5px;background:#4f6bc3"></div>
<span class="t" style="left:685.25px;top:426.5px;font-size:20px;line-height:22px;color:#fff;font-weight:400;letter-spacing:-0.509px;transform-origin:0 18px;">Premium</span>
<span class="t" style="left:1311.05px;top:426.5px;font-size:20px;line-height:22px;color:#4a4a4a;font-weight:400;letter-spacing:0.622px;transform-origin:0 18px;">Код:</span>
<div style="left:1360px;top:420px;width:151px;height:35px;border:1px solid #d4d4d4;border-radius:4px;background:#fff"></div>
<span class="t" style="left:1364.98px;top:426.5px;font-size:20px;line-height:22px;color:#222;font-weight:400;letter-spacing:-0.309px;transform-origin:0 18px;">000000001</span>
<span class="t" style="left:526.25px;top:475.8px;font-size:20px;line-height:22px;color:#4a4a4a;font-weight:400;letter-spacing:-0.258px;transform-origin:0 18px;">Название:</span>
<div class="inp" style="left:680px;top:469px;width:616px;height:35px;"></div>
<span class="t" style="left:685.25px;top:475.8px;font-size:20px;line-height:22px;color:#222;font-weight:400;letter-spacing:-0.506px;transform-origin:0 18px;">Премиум</span>
<div class="btn" style="left:526px;top:518px;width:46px;height:38px;"></div>
<div class="btn" style="left:585px;top:518px;width:46px;height:38px;"></div>
<svg style="left:535px;top:523px" width="28" height="28" viewBox="535 523 28 28" fill="none">
<rect x="546" y="525.7" width="14.4" height="14.4" rx="1.5" fill="#dfe6ec" stroke="#8fa3b5" stroke-width="1.2"/>
<rect x="543.2" y="528.6" width="14.4" height="14.4" rx="1.5" fill="#cfe3c4" stroke="#7f96aa" stroke-width="1.2"/>
<rect x="538.6" y="532.4" width="15" height="15" rx="1.5" fill="#fff" stroke="#476f92" stroke-width="1.5"/>
<path d="M541,539.8 L545.2,544.2 L552.4,533.8" stroke="#0c5a10" stroke-width="4" stroke-linecap="round" stroke-linejoin="round"/>
<path d="M541,539.8 L545.2,544.2 L552.4,533.8" stroke="#36d11c" stroke-width="2" stroke-linecap="round" stroke-linejoin="round"/></svg>
<svg style="left:594px;top:523px" width="28" height="28" viewBox="594 523 28 28" fill="none">
<rect x="605" y="525.7" width="14.4" height="14.4" rx="1.5" fill="#e6ecf1" stroke="#8fa3b5" stroke-width="1.2"/>
<rect x="602.2" y="528.6" width="14.4" height="14.4" rx="1.5" fill="#eef2f5" stroke="#7f96aa" stroke-width="1.2"/>
<rect x="597.6" y="532.4" width="15" height="15" rx="1.5" fill="#fff" stroke="#476f92" stroke-width="1.5"/></svg>
<div style="left:526px;top:570px;width:995px;height:476px;border:1px solid #a3a3a3;background:#fff;overflow:hidden"><div style="left:0px;top:1px;width:50px;height:39.6px;background:#fde38d"></div>
<div style="left:51px;top:1px;width:921px;height:39.6px;background:#fef1c6"></div>
<div style="left:0px;top:41px;width:972px;height:1px;background:#e3e3e3"></div>
<div style="left:14px;top:9px;width:22px;height:22px;border:1px solid #a6a6a6;border-radius:3px;background:#fff"></div>
<svg style="left:14px;top:5px" width="26" height="24" viewBox="541 5 26 24" fill="none" stroke="#0a9b50" stroke-width="3.3" stroke-linejoin="miter" stroke-linecap="round"><path d="M545.6,18.6 L551,24.4 L562.2,8.2"/></svg>
<span class="t" style="left:62.81px;top:9.5px;font-size:20px;line-height:22px;color:#222;font-weight:400;letter-spacing:-0.195px;transform-origin:0 18px;">Функции и отчеты продаж и закупок</span>
<div style="left:0px;top:83px;width:972px;height:1px;background:#e3e3e3"></div>
<div style="left:14px;top:51px;width:22px;height:22px;border:1px solid #a6a6a6;border-radius:3px;background:#fff"></div>
<svg style="left:14px;top:47px" width="26" height="24" viewBox="541 5 26 24" fill="none" stroke="#0a9b50" stroke-width="3.3" stroke-linejoin="miter" stroke-linecap="round"><path d="M545.6,18.6 L551,24.4 L562.2,8.2"/></svg>
<span class="t" style="left:62.75px;top:51.5px;font-size:20px;line-height:22px;color:#222;font-weight:400;letter-spacing:-0.067px;transform-origin:0 18px;">Интеграция с SII</span>
<div style="left:0px;top:125px;width:972px;height:1px;background:#e3e3e3"></div>
<div style="left:14px;top:93px;width:22px;height:22px;border:1px solid #a6a6a6;border-radius:3px;background:#fff"></div>
<svg style="left:14px;top:89px" width="26" height="24" viewBox="541 5 26 24" fill="none" stroke="#0a9b50" stroke-width="3.3" stroke-linejoin="miter" stroke-linecap="round"><path d="M545.6,18.6 L551,24.4 L562.2,8.2"/></svg>
<span class="t" style="left:62.75px;top:93.5px;font-size:20px;line-height:22px;color:#222;font-weight:400;letter-spacing:-0.253px;transform-origin:0 18px;">Интеграция с внешней системой</span>
<div style="left:0px;top:167px;width:972px;height:1px;background:#e3e3e3"></div>
<div style="left:14px;top:135px;width:22px;height:22px;border:1px solid #a6a6a6;border-radius:3px;background:#fff"></div>
<svg style="left:14px;top:131px" width="26" height="24" viewBox="541 5 26 24" fill="none" stroke="#0a9b50" stroke-width="3.3" stroke-linejoin="miter" stroke-linecap="round"><path d="M545.6,18.6 L551,24.4 L562.2,8.2"/></svg>
<span class="t" style="left:62.75px;top:135.5px;font-size:20px;line-height:22px;color:#222;font-weight:400;letter-spacing:-0.216px;transform-origin:0 18px;">Рассылка исходящих фактур</span>
<div style="left:0px;top:209px;width:972px;height:1px;background:#e3e3e3"></div>
<div style="left:14px;top:177px;width:22px;height:22px;border:1px solid #a6a6a6;border-radius:3px;background:#fff"></div>
<svg style="left:14px;top:173px" width="26" height="24" viewBox="541 5 26 24" fill="none" stroke="#0a9b50" stroke-width="3.3" stroke-linejoin="miter" stroke-linecap="round"><path d="M545.6,18.6 L551,24.4 L562.2,8.2"/></svg>
<span class="t" style="left:62.75px;top:177.5px;font-size:20px;line-height:22px;color:#222;font-weight:400;letter-spacing:-0.155px;transform-origin:0 18px;">Рассылка фактур и sms</span>
<div style="left:0px;top:251px;width:972px;height:1px;background:#e3e3e3"></div>
<div style="left:14px;top:219px;width:22px;height:22px;border:1px solid #a6a6a6;border-radius:3px;background:#fff"></div>
<svg style="left:14px;top:215px" width="26" height="24" viewBox="541 5 26 24" fill="none" stroke="#0a9b50" stroke-width="3.3" stroke-linejoin="miter" stroke-linecap="round"><path d="M545.6,18.6 L551,24.4 L562.2,8.2"/></svg>
<span class="t" style="left:62.75px;top:219.5px;font-size:20px;line-height:22px;color:#222;font-weight:400;letter-spacing:-0.059px;transform-origin:0 18px;">Вести учет по статьям бюджета и ЦФО</span>
<div style="left:0px;top:293px;width:972px;height:1px;background:#e3e3e3"></div>
<div style="left:14px;top:261px;width:22px;height:22px;border:1px solid #a6a6a6;border-radius:3px;background:#fff"></div>
<svg style="left:14px;top:257px" width="26" height="24" viewBox="541 5 26 24" fill="none" stroke="#0a9b50" stroke-width="3.3" stroke-linejoin="miter" stroke-linecap="round"><path d="M545.6,18.6 L551,24.4 L562.2,8.2"/></svg>
<span class="t" style="left:86.75px;top:261.5px;font-size:20px;line-height:22px;color:#222;font-weight:400;letter-spacing:-0.253px;transform-origin:0 18px;">Планирование в БУ</span>
<div style="left:0px;top:335px;width:972px;height:1px;background:#e3e3e3"></div>
<div style="left:14px;top:303px;width:22px;height:22px;border:1px solid #a6a6a6;border-radius:3px;background:#fff"></div>
<svg style="left:14px;top:299px" width="26" height="24" viewBox="541 5 26 24" fill="none" stroke="#0a9b50" stroke-width="3.3" stroke-linejoin="miter" stroke-linecap="round"><path d="M545.6,18.6 L551,24.4 L562.2,8.2"/></svg>
<span class="t" style="left:62.75px;top:303.5px;font-size:20px;line-height:22px;color:#222;font-weight:400;letter-spacing:0.023px;transform-origin:0 18px;">Использовать долговые обязательства</span>
<div style="left:0px;top:377px;width:972px;height:1px;background:#e3e3e3"></div>
<div style="left:14px;top:345px;width:22px;height:22px;border:1px solid #a6a6a6;border-radius:3px;background:#fff"></div>
<svg style="left:14px;top:341px" width="26" height="24" viewBox="541 5 26 24" fill="none" stroke="#0a9b50" stroke-width="3.3" stroke-linejoin="miter" stroke-linecap="round"><path d="M545.6,18.6 L551,24.4 L562.2,8.2"/></svg>
<span class="t" style="left:62.75px;top:345.5px;font-size:20px;line-height:22px;color:#222;font-weight:400;letter-spacing:0.051px;transform-origin:0 18px;">Использовать скидки</span>
<div style="left:0px;top:419px;width:972px;height:1px;background:#e3e3e3"></div>
<div style="left:14px;top:387px;width:22px;height:22px;border:1px solid #a6a6a6;border-radius:3px;background:#fff"></div>
<svg style="left:14px;top:383px" width="26" height="24" viewBox="541 5 26 24" fill="none" stroke="#0a9b50" stroke-width="3.3" stroke-linejoin="miter" stroke-linecap="round"><path d="M545.6,18.6 L551,24.4 L562.2,8.2"/></svg>
<span class="t" style="left:62.75px;top:387.5px;font-size:20px;line-height:22px;color:#222;font-weight:400;letter-spacing:-0.100px;transform-origin:0 18px;">Использовать настройки нумератора документов</span>
<div style="left:0px;top:461px;width:972px;height:1px;background:#e3e3e3"></div>
<div style="left:14px;top:429px;width:22px;height:22px;border:1px solid #a6a6a6;border-radius:3px;background:#fff"></div>
<svg style="left:14px;top:425px" width="26" height="24" viewBox="541 5 26 24" fill="none" stroke="#0a9b50" stroke-width="3.3" stroke-linejoin="miter" stroke-linecap="round"><path d="M545.6,18.6 L551,24.4 L562.2,8.2"/></svg>
<span class="t" style="left:86.75px;top:429.5px;font-size:20px;line-height:22px;color:#222;font-weight:400;letter-spacing:-0.149px;transform-origin:0 18px;">Использовать серии исходящих фактур</span>
<div style="left:0px;top:503px;width:972px;height:1px;background:#e3e3e3"></div>
<div style="left:14px;top:471px;width:22px;height:22px;border:1px solid #a6a6a6;border-radius:3px;background:#fff"></div>
<svg style="left:14px;top:467px" width="26" height="24" viewBox="541 5 26 24" fill="none" stroke="#0a9b50" stroke-width="3.3" stroke-linejoin="miter" stroke-linecap="round"><path d="M545.6,18.6 L551,24.4 L562.2,8.2"/></svg>
<div style="left:976px;top:34px;width:12px;height:406px;background:#d2d2d2;border-radius:6px"></div>
<div style="left:976px;top:34px;width:12px;height:253px;background:#999;border-radius:6px"></div>
<svg style="left:978px;top:12px" width="9" height="8" viewBox="0 0 9 8"><path d="M4.3,0.8 L7.8,6.8 H0.8 Z" fill="#c4c4c4"/></svg>
<svg style="left:978px;top:452px" width="9" height="8" viewBox="0 0 9 8"><path d="M4.3,7 L7.8,1 H0.8 Z" fill="#555"/></svg></div>
<span class="t" style="left:526.25px;top:1067px;font-size:20px;line-height:22px;color:#4a4a4a;font-weight:400;letter-spacing:-0.376px;transform-origin:0 18px;">Комментарий:</span>
<div class="inp" style="left:680px;top:1060px;width:615px;height:35px;"></div>
</body></html>
